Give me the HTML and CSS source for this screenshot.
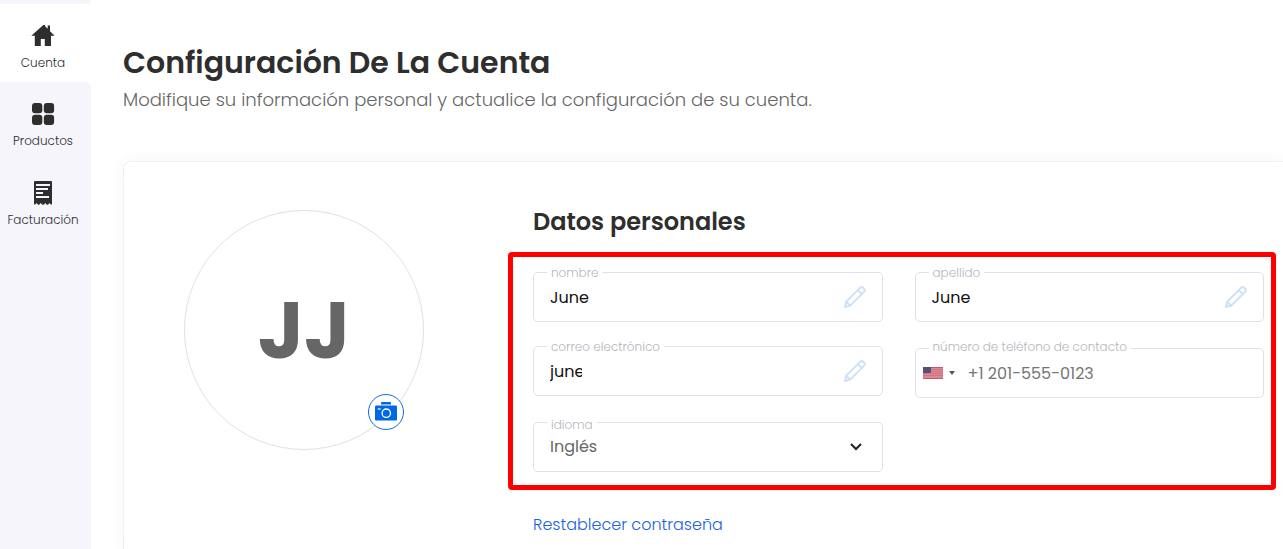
FILE: index.html
```html
<!DOCTYPE html>
<html lang="es">
<head>
<meta charset="utf-8">
<meta name="viewport" content="width=device-width, initial-scale=1">
<title>Configuración De La Cuenta</title>
<link rel="stylesheet" href="styles.css">
</head>
<body>
<div class="app">
  <nav class="sidebar">
    <div class="sidebar-cap"></div>
    <a class="nav-item active" href="#cuenta">
      <svg width="24" height="24" viewBox="0 0 24 24" fill="currentColor" aria-hidden="true"><path d="M12.300 1 .300 11.800h3.500V22h6v-7h4v7H20V11.800h3.700L19 7.300V1.500h-2.300v3.200L14 2V1z"/></svg>
      <span>Cuenta</span>
    </a>
    <div class="nav-rest">
      <a class="nav-item" href="#productos">
        <svg width="24" height="24" viewBox="0 0 24 24" fill="currentColor" aria-hidden="true"><rect x="1" y="1" width="10.300" height="10.300" rx="3"/><rect x="12.800" y="1" width="10.300" height="10.300" rx="3"/><rect x="1" y="12.800" width="10.300" height="10.300" rx="3"/><rect x="12.800" y="12.800" width="10.300" height="10.300" rx="3"/></svg>
        <span>Productos</span>
      </a>
      <a class="nav-item" href="#facturacion">
        <svg width="24" height="24" viewBox="0 0 24 24" aria-hidden="true"><path fill="currentColor" d="M3 1q0-1 1-1h16q1 0 1 1v22.500h-1.200L18.500 22l-1.500 1.700h-1.200L14.300 22l-1.600 1.700h-1.400L9.700 22l-1.500 1.700H7L5.500 22l-1.300 1.500H3z"/><path stroke="#f5f5fb" stroke-width="1.800" d="M5 4h14M5 8h12M5 12h7M5 16h13"/></svg>
        <span>Facturación</span>
      </a>
    </div>
  </nav>

  <main class="main">
    <header class="page-head">
      <h1>Configuración De La Cuenta</h1>
      <p>Modifique su información personal y actualice la configuración de su cuenta.</p>
    </header>

    <section class="card">
      <div class="avatar">
        <span>JJ</span>
        <button class="camera" type="button" aria-label="Cambiar foto">
          <svg width="22" height="20" viewBox="0 0 22 20" aria-hidden="true"><path fill="currentColor" d="M6 2.500V1q0-1 1-1h8q1 0 1 1v1.500z"/><rect y="3.500" width="22" height="15" rx="1.200" fill="currentColor"/><circle cx="11.300" cy="11.200" r="4.200" fill="none" stroke="#fff" stroke-width="1.300"/><path d="M2.700 7h3" stroke="#fff" stroke-width="1.200"/></svg>
        </button>
      </div>

      <form class="details">
        <h2>Datos personales</h2>
        <div class="fields">
          <div class="field">
            <label for="nombre">nombre</label>
            <input id="nombre" type="text" value="June">
            <button class="edit" type="button" aria-label="Editar nombre"><svg width="24" height="24" viewBox="0 0 24 24" aria-hidden="true"><path d="m2 22 1.200-5.400L17 2.900q2-1.600 3.700.3 1.900 1.700.3 3.700L7.300 20.600zM14.800 5.100l4 4M3.200 16.600l4.100 4"/></svg></button>
          </div>
          <div class="field">
            <label for="apellido">apellido</label>
            <input id="apellido" type="text" value="June">
            <button class="edit" type="button" aria-label="Editar apellido"><svg width="24" height="24" viewBox="0 0 24 24" aria-hidden="true"><path d="m2 22 1.200-5.400L17 2.900q2-1.600 3.700.3 1.900 1.700.3 3.700L7.300 20.600zM14.800 5.100l4 4M3.200 16.600l4.100 4"/></svg></button>
          </div>
          <div class="field">
            <label for="correo">correo electrónico</label>
            <input id="correo" class="short" type="text" value="june">
            <button class="edit" type="button" aria-label="Editar correo"><svg width="24" height="24" viewBox="0 0 24 24" aria-hidden="true"><path d="m2 22 1.200-5.400L17 2.900q2-1.600 3.700.3 1.900 1.700.3 3.700L7.300 20.600zM14.800 5.100l4 4M3.200 16.600l4.100 4"/></svg></button>
          </div>
          <div class="field phone">
            <label for="telefono">número de teléfono de contacto</label>
            <button class="country" type="button" aria-label="Estados Unidos">
              <svg width="20" height="12" viewBox="0 0 20 12" aria-hidden="true"><path fill="#d98a94" d="M0 0h20v12H0z"/><path stroke="#c65768" d="M0 .5h20M0 11.500h20"/><path stroke="#cf7582" d="M0 2.500h20M0 4.500h20M0 6.500h20M0 8.500h20"/><path fill="#53507c" d="M0 0h8v6H0z"/></svg>
              <svg width="6" height="4" viewBox="0 0 6 4" aria-hidden="true"><path fill="#555" d="M0 0h6L3 4z"/></svg>
            </button>
            <input id="telefono" type="tel" placeholder="+1 201-555-0123">
          </div>
          <div class="field language">
            <label for="idioma">idioma</label>
            <select id="idioma"><option>Inglés</option></select>
            <svg class="chevron" width="12" height="8" viewBox="0 0 12 8" aria-hidden="true"><path d="m1 1 5 5 5-5"/></svg>
          </div>
        </div>
        <a class="reset" href="#contrasena">Restablecer contraseña</a>
      </form>
    </section>
  </main>
</div>
</body>
</html>
```
FILE: styles.css
```css
* {
  box-sizing: border-box;
}

body {
  margin: 0;
  background: #fff;
  color: #2e2e2e;
  font-family: Poppins, Inter, "Liberation Sans", sans-serif;
}

button {
  padding: 0;
  border: 0;
  background: none;
  cursor: pointer;
}

svg {
  display: block;
}

.app {
  display: flex;
  min-height: 100vh;
}

.sidebar {
  display: flex;
  flex: 0 0 91px;
  flex-direction: column;
}

.sidebar-cap {
  height: 4px;
  background: #f5f5fb;
  border-radius: 0 0 4px 0;
}

.nav-rest {
  flex: 1;
  background: #f5f5fb;
  border-radius: 0 6px 0 0;
}

.nav-item {
  display: flex;
  flex-direction: column;
  align-items: center;
  gap: 6px;
  height: 78px;
  padding: 20px 5px 0 0;
  color: #2e2e2e;
  font-size: 12px;
  font-weight: 300;
  line-height: 18px;
  text-decoration: none;
}

.nav-item + .nav-item {
  padding-top: 21px;
}

.main {
  display: flex;
  flex: 1;
  flex-direction: column;
  min-width: 0;
  padding: 38px 0 0 32px;
}

h1,
h2,
p {
  margin: 0;
}

h1 {
  font-size: 30px;
  font-weight: 600;
  line-height: 50px;
}

.page-head p {
  color: #666;
  font-size: 18px;
  font-weight: 300;
  line-height: 24px;
}

.card {
  display: flex;
  flex: 1;
  gap: 84px;
  margin-top: 49px;
  padding: 48px 7px 0 60px;
  border: 1px solid #f0f0f3;
  border-width: 1px 0 0 1px;
  border-radius: 8px 0 0 0;
  box-shadow: 0 0 16px rgba(40, 60, 90, 0.06);
}

.avatar {
  position: relative;
  display: flex;
  flex: 0 0 240px;
  align-items: center;
  justify-content: center;
  height: 240px;
  border: 1px solid #e1e1e1;
  border-radius: 50%;
  color: #666;
  font-size: 80px;
  font-weight: 700;
  line-height: 1;
}

.camera {
  position: absolute;
  right: 19px;
  bottom: 19px;
  display: flex;
  align-items: center;
  justify-content: center;
  width: 36px;
  height: 36px;
  border: 1px solid #0b6be3;
  border-radius: 50%;
  background: #fff;
  color: #0068e5;
}

.details {
  flex: 1;
  min-width: 0;
}

h2 {
  padding: 0 0 18px 25px;
  font-size: 24px;
  font-weight: 600;
  line-height: 24px;
}

.fields {
  display: grid;
  grid-template-columns: repeat(2, minmax(0, 1fr));
  grid-template-rows: auto 52px auto;
  gap: 24px 32px;
  padding: 15px 7px 13px 20px;
  border: 5px solid #f00;
  border-radius: 4px;
}

.field {
  position: relative;
  display: flex;
  align-items: center;
  height: 50px;
  padding: 0 15px 0 16px;
  border: 1px solid #dfe1e6;
  border-radius: 5px;
}

.field label {
  position: absolute;
  top: -8px;
  left: 13px;
  padding: 0 4px;
  background: #fff;
  color: #b3b6bd;
  font-size: 12px;
  font-weight: 300;
  line-height: 16px;
}

.field input,
.field select {
  flex: 1;
  min-width: 0;
  height: 48px;
  padding: 0;
  border: 0;
  outline: 0;
  background: transparent;
  color: #111;
  font: inherit;
  font-size: 16px;
}

.field .short {
  flex: 0 0 32px;
}

.field select {
  padding-bottom: 2px;
  appearance: none;
  color: #666;
}

.phone {
  align-self: end;
  padding-left: 7px;
}

.phone label {
  top: -10px;
}

.language label {
  top: -6px;
}

.phone input::placeholder {
  color: #757575;
  opacity: 1;
}

.country {
  display: flex;
  align-items: center;
  gap: 6px;
  margin-right: 13px;
}

.edit {
  margin-left: auto;
}

.edit path {
  fill: none;
  stroke: #cce1fa;
  stroke-linejoin: round;
  stroke-width: 2;
}

.chevron {
  position: absolute;
  right: 20px;
  pointer-events: none;
}

.chevron path {
  fill: none;
  stroke: #222;
  stroke-width: 2;
}

.reset {
  display: inline-block;
  margin: 22px 0 0 25px;
  color: #1d62dc;
  font-size: 16px;
  font-weight: 300;
  line-height: 26px;
  text-decoration: none;
}
```
